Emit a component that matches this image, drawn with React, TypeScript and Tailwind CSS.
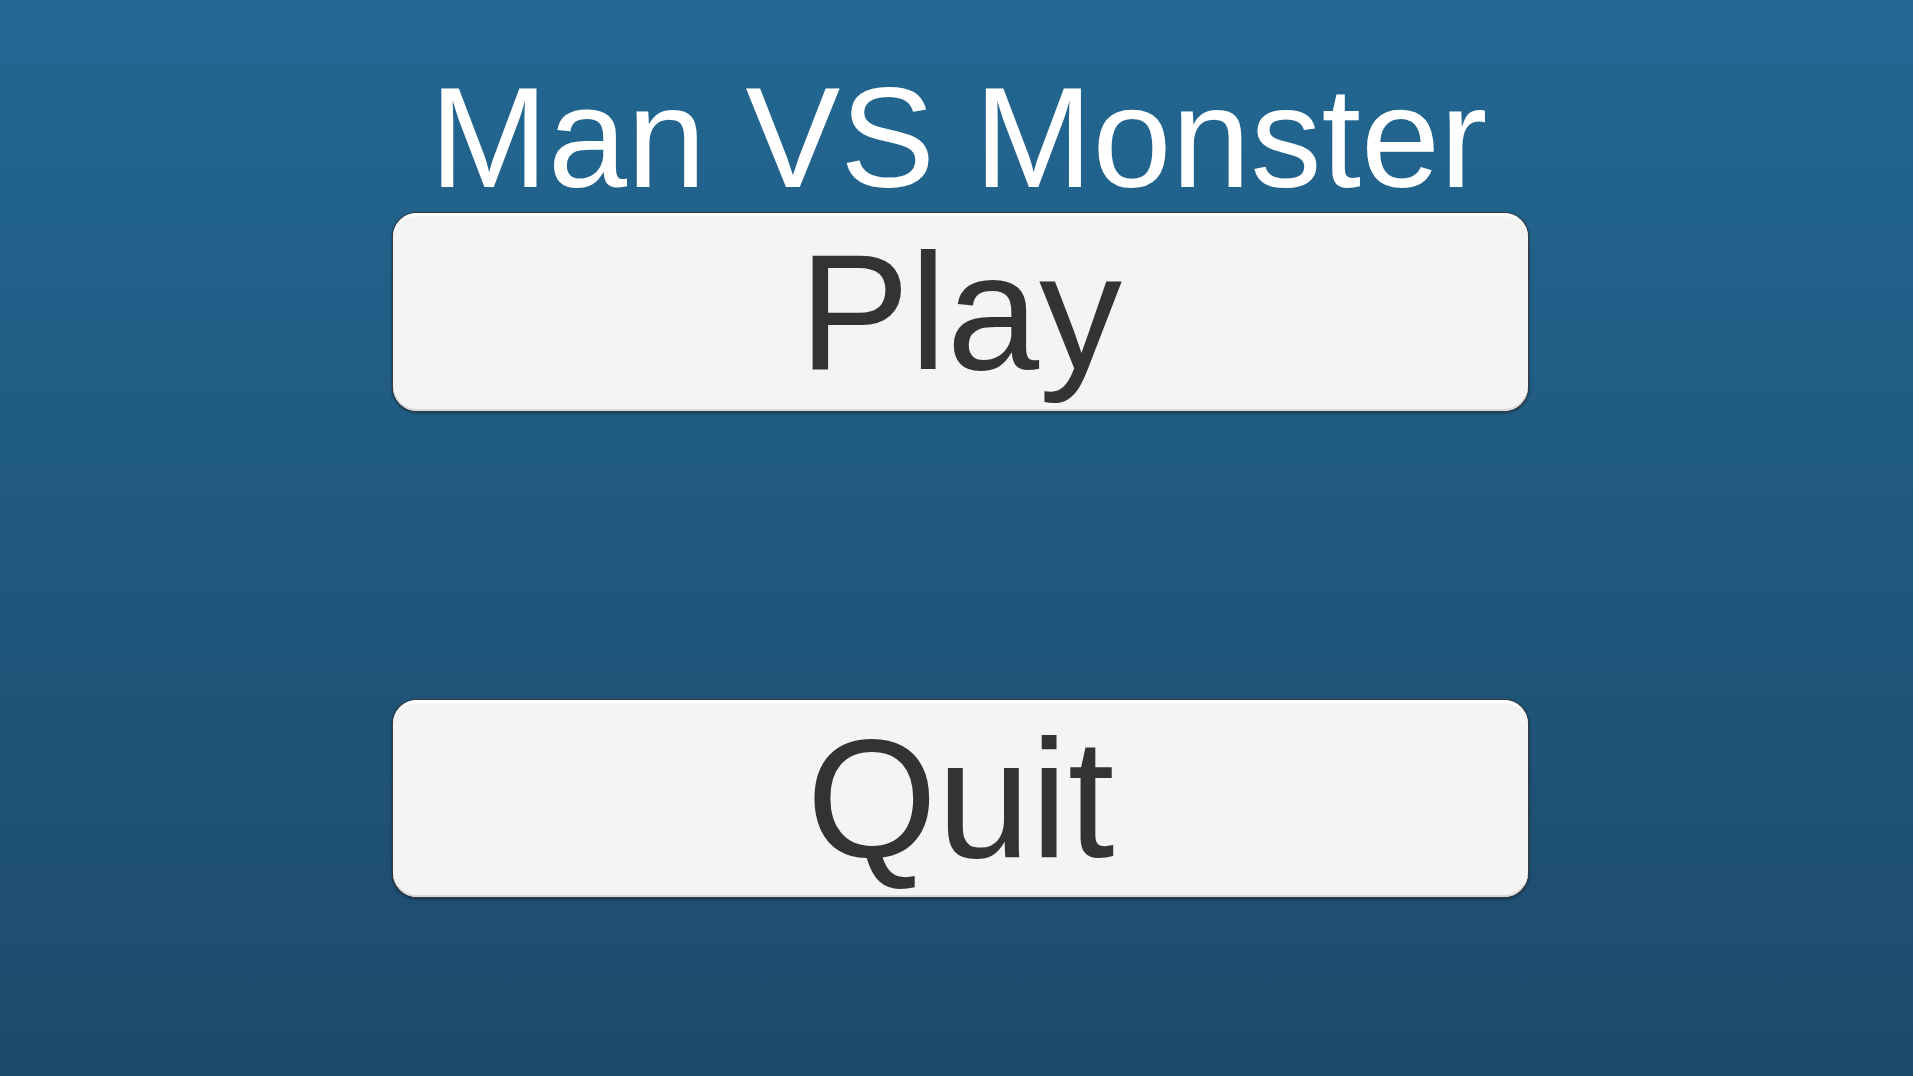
export default function App() {
    return (
        <div className="w-full h-[1076px] bg-gradient-to-b from-[#226893] to-[#1d4a6b] flex flex-col items-center pl-[4px] pt-[67px] overflow-hidden font-['Liberation_Sans']">
            <h1 className="h-[142px] text-[142px] leading-none text-white whitespace-nowrap">
                Man VS Monster
            </h1>

            {/* main menu buttons */}
            <button
                type="button"
                className="mt-[4px] ml-[4px] w-[1135px] h-[198px] rounded-[24px] bg-[#f4f4f4] shadow-[inset_0_3px_0_#ffffff,inset_0_-2px_0_#d8d8d8,0_0_0_1px_#3c3c3c,0_1px_3px_1px_rgba(0,0,0,0.45)] flex items-center justify-center text-[#333333] text-[166px] leading-none"
            >
                Play
            </button>

            <button
                type="button"
                className="mt-[289px] ml-[4px] w-[1135px] h-[197px] rounded-[24px] bg-[#f4f4f4] shadow-[inset_0_3px_0_#ffffff,inset_0_-2px_0_#d8d8d8,0_0_0_1px_#3c3c3c,0_1px_3px_1px_rgba(0,0,0,0.45)] flex items-center justify-center text-[#333333] text-[168px] leading-none"
            >
                Quit
            </button>
        </div>
    );
}
